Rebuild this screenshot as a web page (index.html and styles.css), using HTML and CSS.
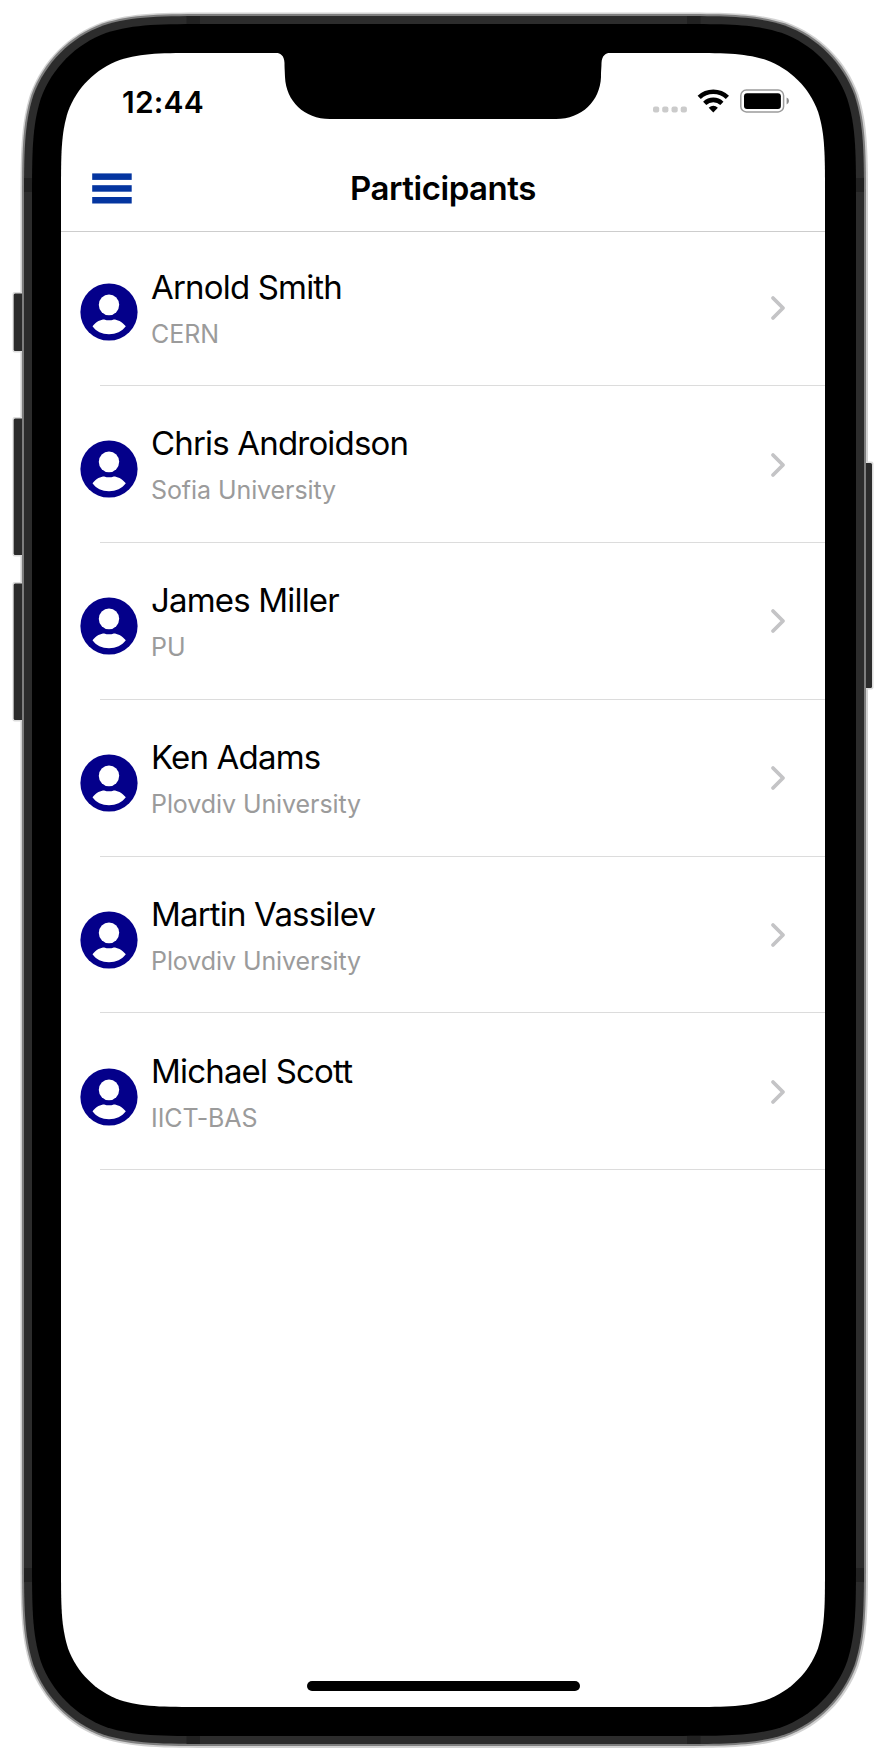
FILE: index.html
```html
<!DOCTYPE html>
<html lang="en">
<head>
<meta charset="utf-8">
<title>Participants</title>
<link rel="stylesheet" href="styles.css">
</head>
<body>
<svg class="defs" width="0" height="0" aria-hidden="true">
  <symbol id="person" viewBox="0 0 58 58"><circle cx="29" cy="29" r="28.6" fill="#04008a"/><ellipse cx="29" cy="21.8" rx="10.2" ry="10.4" fill="#fff"/><path d="M12.500 43.200C16 38.400 21 36.400 24.200 36.400C27.400 37.600 30.600 37.600 33.800 36.400C37 36.400 42 38.400 45.800 43.200C42 48.500 36 51.200 29 51.200C22 51.200 16 48.500 12.500 43.200Z" fill="#fff"/></symbol>
  <symbol id="chevron" viewBox="0 0 16 26"><path d="M3 3L13 13L3 23" fill="none" stroke="#c4c4c6" stroke-width="3.800" stroke-linecap="round" stroke-linejoin="round"/></symbol>
</svg>
<div class="device">
  <svg class="frame" width="886" height="1750" viewBox="0 0 886 1750" aria-hidden="true">
    <path class="shell" data-box="20.5 12.500 868 1748 129" fill="#d2d2d2"/>
    <g fill="#dcdcdc">
      <rect x="12.500" y="292" width="14" height="60.500" rx="2"/><rect x="12.500" y="417" width="14" height="139.500" rx="2"/><rect x="12.500" y="582" width="14" height="139.500" rx="2"/><rect x="862" y="461.500" width="11.500" height="228" rx="2"/>
    </g>
    <g fill="#2b2b2b">
      <rect x="13.700" y="293.500" width="14" height="57.500" rx="1.500"/><rect x="13.700" y="418.500" width="14" height="136.500" rx="1.500"/><rect x="13.700" y="583.500" width="14" height="136.500" rx="1.500"/><rect x="860" y="463" width="12" height="225" rx="1.500"/>
    </g>
    <path class="shell" data-box="22 14 866 1746 127.500" fill="#7e7e7e"/>
    <path class="shell" data-box="24 16 864 1744 125.500" fill="#2c2c2c"/>
    <g fill="#212121">
      <rect x="186.500" y="16" width="13.500" height="8"/><rect x="687" y="16" width="13.500" height="8"/><rect x="186.500" y="1736" width="13.500" height="8"/><rect x="687" y="1736" width="13.500" height="8"/>
      <rect x="24" y="178" width="8" height="14"/><rect x="856" y="178" width="8" height="14"/><rect x="24" y="1568" width="8" height="14"/><rect x="856" y="1568" width="8" height="14"/>
    </g>
    <path class="shell" data-box="32 24 856 1736 118" fill="#000"/>
    <path class="shell" data-box="61 53 825 1707 93" fill="#fff"/>
    <path d="M272 52.500H274C281 52.500 284.300 56 284.500 63C284.500 68 284.800 70 285 77C286 101 304 119 330 119H556C582 119 600 101 601 77C601 70 601.500 68 601.500 63C602 56 605 52.500 612 52.500Z"/>
  </svg>
  <main class="screen">
    <div class="status">
      <span class="time">12:44</span>
      <svg class="indicators" width="140" height="26" viewBox="0 0 140 26">
        <g fill="#cbcbcb"><rect x="1" y="18.400" width="6.200" height="6.200" rx="2"/><rect x="10.200" y="18.400" width="6.200" height="6.200" rx="2"/><rect x="19.500" y="18.400" width="6.200" height="6.200" rx="2"/><rect x="28.700" y="18.400" width="6.200" height="6.200" rx="2"/></g>
        <g fill="none" stroke="#000" stroke-width="4.600"><path d="M47.200 9.400A20.300 20.300 0 0 1 75.400 9.400"/><path d="M52.700 15.300A12.500 12.500 0 0 1 69.900 15.300"/></g>
        <path d="M56.700 19.800Q61.300 15.900 65.900 19.800L61.300 24.500Z"/>
        <rect x="88.800" y="2.100" width="42.800" height="21.800" rx="5.500" fill="none" stroke="#9c9c9c" stroke-width="1.500"/>
        <rect x="92" y="5.200" width="36.900" height="15.800" rx="3"/><path d="M134.600 9.600Q137 10.600 137 13Q137 15.400 134.600 16.400Z" fill="#8c8c8c"/>
      </svg>
    </div>
    <header class="navbar">
      <svg class="menu" width="40" height="32" viewBox="0 0 40 32" fill="#0435a0"><rect x=".2" y=".4" width="39.500" height="6.500"/><rect x=".2" y="12.200" width="39.500" height="6.500"/><rect x=".2" y="24" width="39.500" height="6.500"/></svg>
      <h1 class="title">Participants</h1>
    </header>
    <ul class="list">
      <li class="row"><svg class="avatar"><use href="#person"/></svg><div class="info"><div class="name">Arnold Smith</div><div class="org">CERN</div></div><svg class="chevron"><use href="#chevron"/></svg></li>
      <li class="row"><svg class="avatar"><use href="#person"/></svg><div class="info"><div class="name">Chris Androidson</div><div class="org">Sofia University</div></div><svg class="chevron"><use href="#chevron"/></svg></li>
      <li class="row"><svg class="avatar"><use href="#person"/></svg><div class="info"><div class="name">James Miller</div><div class="org">PU</div></div><svg class="chevron"><use href="#chevron"/></svg></li>
      <li class="row"><svg class="avatar"><use href="#person"/></svg><div class="info"><div class="name">Ken Adams</div><div class="org">Plovdiv University</div></div><svg class="chevron"><use href="#chevron"/></svg></li>
      <li class="row"><svg class="avatar"><use href="#person"/></svg><div class="info"><div class="name">Martin Vassilev</div><div class="org">Plovdiv University</div></div><svg class="chevron"><use href="#chevron"/></svg></li>
      <li class="row"><svg class="avatar"><use href="#person"/></svg><div class="info"><div class="name">Michael Scott</div><div class="org">IICT-BAS</div></div><svg class="chevron"><use href="#chevron"/></svg></li>
    </ul>
    <div class="home"></div>
  </main>
</div>
<script src="frame.js"></script>
</body>
</html>
```
FILE: styles.css
```css
* { box-sizing: border-box; }
body { margin: 0; background: #fff; font-family: Inter, "Liberation Sans", sans-serif; color: #000; }
.defs { position: absolute; }
.device { position: relative; width: 886px; height: 1750px; overflow: hidden; padding: 53px 61px 43px; }
.frame { position: absolute; inset: 0; }
.screen { position: relative; display: flex; flex-direction: column; width: 764px; height: 1654px; }
.status { display: flex; justify-content: space-between; height: 90px; padding: 35px 33px 0 61px; }
.time { margin-top: -1px; font-size: 30px; line-height: 30px; font-weight: 600; letter-spacing: 0.2px; white-space: nowrap; }
.indicators { display: block; }
.navbar { display: grid; grid-template-columns: 31px 40px 1fr 71px; height: 89px; border-bottom: 1px solid #cdcdcd; }
.menu { grid-column: 2; margin-top: 30px; }
.title { margin: 0; padding-top: 24px; font-size: 33px; line-height: 42px; font-weight: 600; text-align: center; letter-spacing: -0.45px; }
.list { list-style: none; margin: -3px 0 0; padding: 0; }
.row { display: flex; height: 156.900px; padding: 0 39.500px 0 19px; background: linear-gradient(#dcdcdc, #dcdcdc) 39px 100% / 100% 1px no-repeat; }
.avatar { width: 58px; height: 58px; margin-top: 54.300px; }
.info { flex: 1; padding: 36.500px 0 0 13px; }
.name { font-size: 33px; line-height: 42px; letter-spacing: -0.820px; white-space: nowrap; }
.org { margin-top: 9px; font-size: 25px; line-height: 34px; letter-spacing: -0.080px; color: #9b9b9b; white-space: nowrap; }
.chevron { width: 16px; height: 26px; margin-top: 65.700px; }
.home { width: 273px; height: 10px; margin: auto auto 15.700px 246px; border-radius: 5px; background: #000; }
```
FILE: frame.js
```js
// Draws a rectangle with continuous-curvature corners for each shell layer.
document.querySelectorAll(".shell").forEach(function (el) {
  var b = el.dataset.box.split(" ").map(Number);
  var r = b[4];
  var a = 1.52866 * r, c = 1.08849 * r, d = 0.86841 * r, e = 0.63149 * r;
  var f = 0.07491 * r, g = 0.37282 * r, h = 0.16906 * r;
  function corner(x, y, sx, sy, reverse) {
    var p = [[0, a], [0, c], [0, d], [f, e], [h, g], [g, h], [e, f], [d, 0], [c, 0], [a, 0]];
    if (reverse) p.reverse();
    var q = p.map(function (k) { return (x + sx * k[0]) + " " + (y + sy * k[1]); });
    return q[0] + "C" + q.slice(1).join(" ");
  }
  el.setAttribute("d", "M" + corner(b[0], b[1], 1, 1, false) +
    "L" + corner(b[2], b[1], -1, 1, true) +
    "L" + corner(b[2], b[3], -1, -1, false) +
    "L" + corner(b[0], b[3], 1, -1, true) + "Z");
});
```
